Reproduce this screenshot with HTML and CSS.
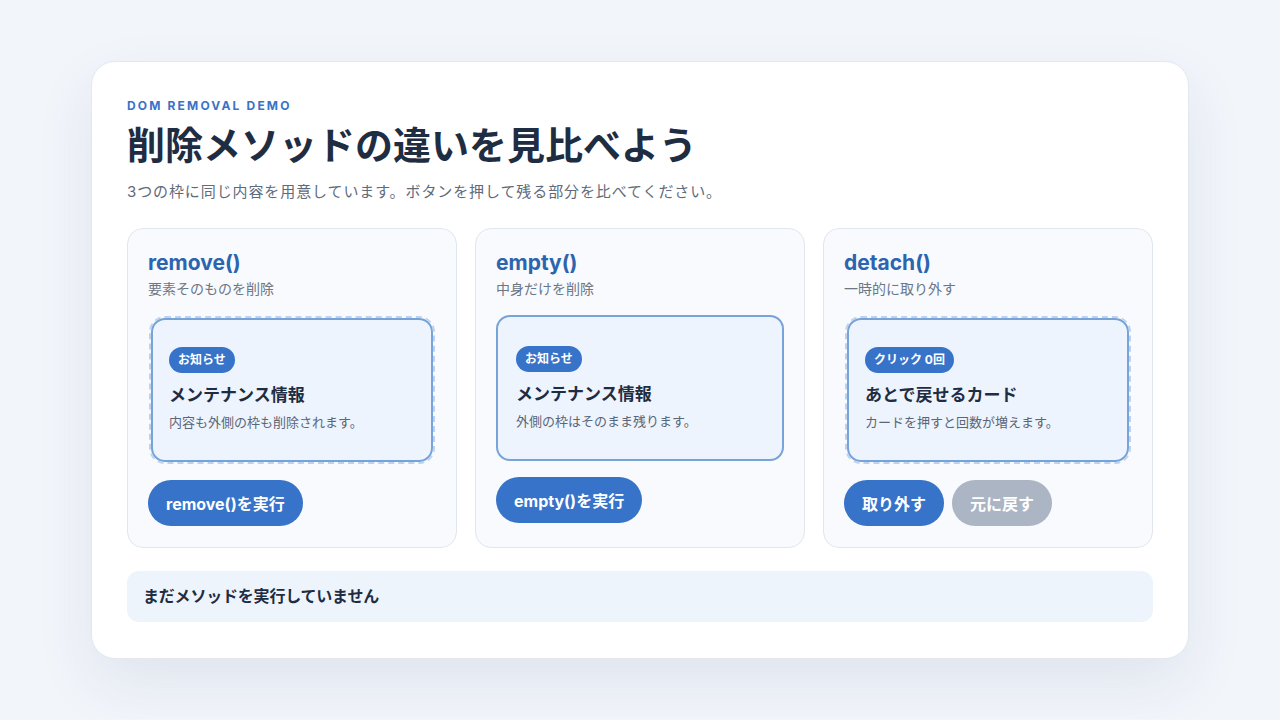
FILE: index.html
```html
<!DOCTYPE html>
<html lang="ja">
<head>
    <meta charset="UTF-8">
    <meta name="viewport" content="width=device-width, initial-scale=1.0">
    <title>DOM Removal Demo</title>
    <link rel="stylesheet" href="styles.css">
</head>
<body>
    <main class="panel">
        <p class="eyebrow">DOM REMOVAL DEMO</p>
        <h1>削除メソッドの違いを見比べよう</h1>
        <p class="lead">3つの枠に同じ内容を用意しています。ボタンを押して残る部分を比べてください。</p>

        <div class="methods">
            <section class="method">
                <h2>remove()</h2>
                <p class="method-note">要素そのものを削除</p>
                <div class="notice target">
                    <span class="badge">お知らせ</span>
                    <h3>メンテナンス情報</h3>
                    <p>内容も外側の枠も削除されます。</p>
                </div>
                <div class="actions">
                    <button>remove()を実行</button>
                </div>
            </section>

            <section class="method">
                <h2>empty()</h2>
                <p class="method-note">中身だけを削除</p>
                <div class="notice">
                    <span class="badge">お知らせ</span>
                    <h3>メンテナンス情報</h3>
                    <p>外側の枠はそのまま残ります。</p>
                </div>
                <div class="actions">
                    <button>empty()を実行</button>
                </div>
            </section>

            <section class="method">
                <h2>detach()</h2>
                <p class="method-note">一時的に取り外す</p>
                <div class="notice target">
                    <span class="badge">クリック 0回</span>
                    <h3>あとで戻せるカード</h3>
                    <p>カードを押すと回数が増えます。</p>
                </div>
                <div class="actions">
                    <button>取り外す</button>
                    <button class="muted" disabled>元に戻す</button>
                </div>
            </section>
        </div>

        <div class="status">まだメソッドを実行していません</div>
    </main>
</body>
</html>
```

FILE: styles.css
```css
* {
    box-sizing: border-box;
}
html {
    background: #f2f5fa;
}
body {
    margin: 0;
    padding: 61px 0 60px;
    font-family: Inter, "Noto Sans CJK JP", sans-serif;
    color: #1f2d42;
}
.panel {
    width: 1098px;
    margin: 0 auto;
    padding: 36px 35px 36px;
    background: #ffffff;
    border: 1px solid #e3e8ef;
    border-radius: 24px;
    box-shadow: 0 24px 60px rgba(40, 70, 120, 0.09);
}
.eyebrow {
    margin: 0;
    font-size: 12px;
    line-height: 16px;
    font-weight: 700;
    letter-spacing: 0.18em;
    color: #3a72c8;
}
h1 {
    margin: 8px 0 0;
    font-size: 38px;
    line-height: 46px;
    font-weight: 700;
    color: #1f2d42;
}
.lead {
    margin: 13px 0 0;
    font-size: 15px;
    line-height: 22px;
    letter-spacing: 0.9px;
    color: #5f6b7b;
}
.methods {
    display: grid;
    grid-template-columns: repeat(3, 1fr);
    gap: 18px;
    margin-top: 25px;
}
.method {
    display: flex;
    flex-direction: column;
    padding: 21px 20px 21px;
    background: #f8fafd;
    border: 1px solid #e1e7ef;
    border-radius: 16px;
}
h2 {
    margin: 0;
    font-size: 21px;
    line-height: 26px;
    font-weight: 700;
    color: #2d64b0;
}
.method-note {
    margin: 3px 0 0;
    font-size: 14px;
    line-height: 20px;
    color: #6b7686;
}
.notice {
    margin-top: 16px;
    padding: 29px 18px;
    background: #edf4fd;
    border: 2px solid #76a3d8;
    border-radius: 14px;
}
.notice.target {
    margin: 19px 3px 2px;
    padding: 27px 16px 29px;
    outline: 2px dashed #bdd2ee;
}
.badge {
    display: inline-block;
    height: 26px;
    padding: 0 9px;
    border-radius: 13px;
    background: #3773c9;
    color: #ffffff;
    font-size: 12px;
    line-height: 26px;
    font-weight: 700;
}
h3 {
    margin: 10px 0 0;
    font-size: 17px;
    line-height: 24px;
    font-weight: 700;
    color: #1f2d42;
}
.notice p {
    margin: 6px 0 0;
    font-size: 13px;
    line-height: 18px;
    color: #5b6676;
}
.actions {
    display: flex;
    gap: 8px;
    margin-top: 16px;
}
button {
    height: 46px;
    padding: 0 18px;
    border: none;
    border-radius: 23px;
    background: #3773c9;
    color: #ffffff;
    font-family: inherit;
    font-size: 16px;
    font-weight: 700;
    cursor: pointer;
}
button.muted {
    background: #abb5c3;
    cursor: default;
}
.status {
    margin-top: 23px;
    padding: 0 16px;
    height: 51px;
    line-height: 51px;
    background: #eef4fc;
    border-radius: 12px;
    font-size: 16px;
    font-weight: 700;
    letter-spacing: -0.2px;
    color: #1f2d42;
}
```
